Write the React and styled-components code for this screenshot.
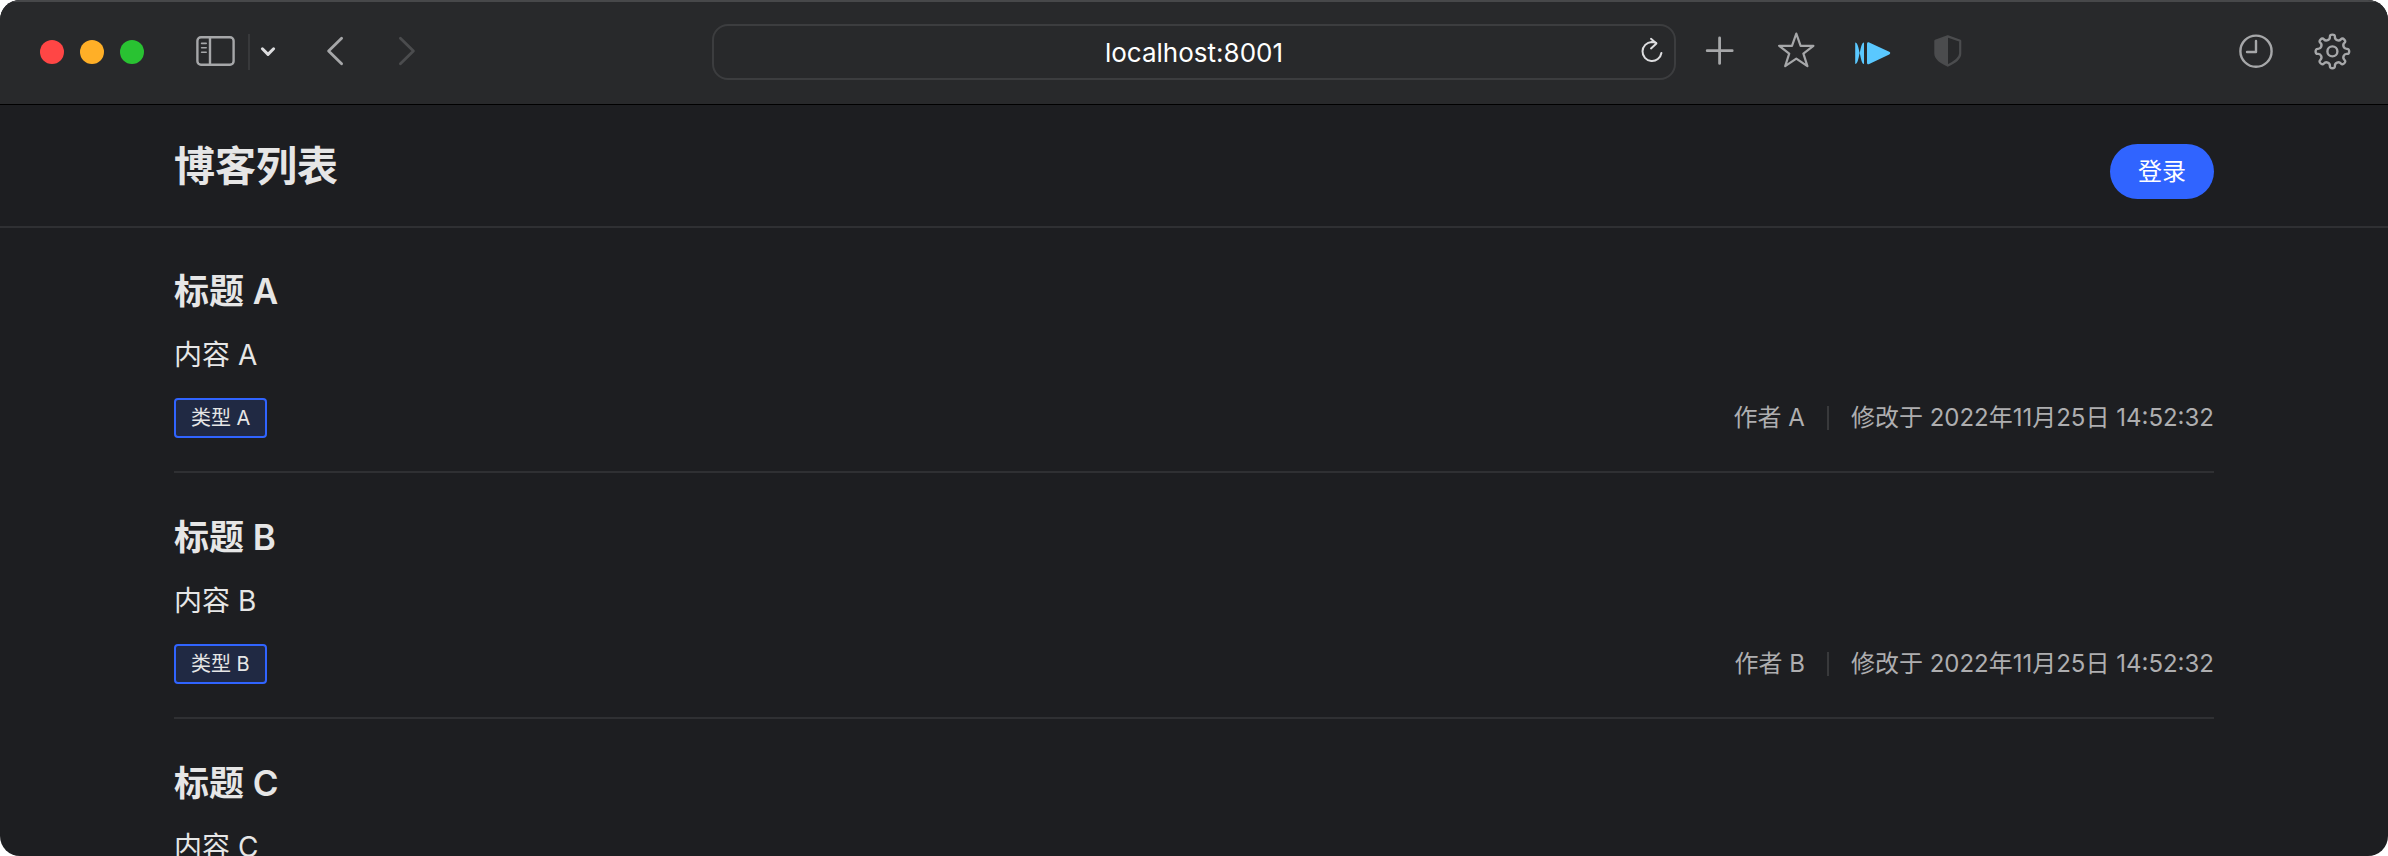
import React from "react";
import styled, { createGlobalStyle } from "styled-components";

const GlobalStyle = createGlobalStyle`
  *, *::before, *::after { box-sizing: border-box; }
  body {
    margin: 0;
    background: #ffffff;
    font-family: Inter, "Noto Sans CJK SC", sans-serif;
    color: #e6e6e6;
  }
  h1, h2, p { margin: 0; }
  button, input { font: inherit; }
`;

const Window = styled.div`
  display: flex;
  flex-direction: column;
  height: 100vh;
  overflow: hidden;
  border-radius: 20px;
  background: #1d1e21;
`;

const Toolbar = styled.div`
  display: grid;
  grid-template-columns: 1fr minmax(0, 964px) 1fr;
  align-items: center;
  flex: none;
  height: 105px;
  padding: 0 36px 2px;
  background: #28292b;
  border-top: 2px solid #47484a;
  border-bottom: 1px solid #000000;
`;

const ToolGroup = styled.div`
  display: flex;
  align-items: center;
  gap: ${(p) => p.$gap}px;
`;

const LeftTools = styled(ToolGroup)`
  margin: 0 36px 0 4px;
`;

const RightTools = styled.div`
  display: flex;
  justify-content: space-between;
  padding-left: 24px;
`;

const Light = styled.button`
  width: 24px;
  height: 24px;
  padding: 0;
  border: 0;
  border-radius: 50%;
  background: ${(p) => p.$color};
`;

const SidebarTools = styled(ToolGroup)`
  margin-left: 32px;
`;

const Navigation = styled(ToolGroup)`
  margin-left: 22px;
`;

const Separator = styled.span`
  width: 2px;
  height: ${(p) => p.$height}px;
  background: #38393b;
`;

const IconButton = styled.button`
  display: flex;
  flex: none;
  align-items: center;
  justify-content: center;
  width: ${(p) => p.$width || 40}px;
  height: 40px;
  padding: 0;
  border: 0;
  background: none;
  color: ${(p) => p.$color || "#a6a7a9"};
`;

const AddressBar = styled.div`
  display: flex;
  align-items: center;
  height: 56px;
  padding: 0 2px 0 42px;
  border: 2px solid #3c3d3f;
  border-radius: 16px;
`;

const AddressInput = styled.input`
  flex: 1;
  min-width: 0;
  height: 40px;
  padding: 0;
  border: 0;
  outline: 0;
  background: none;
  color: #ffffff;
  font-size: 26px;
  text-align: center;
`;

const Container = styled.div`
  width: 100%;
  max-width: 2040px;
  margin: 0 auto;
`;

const Header = styled.header`
  flex: none;
  border-bottom: 2px solid #2f3033;
`;

const HeaderRow = styled(Container)`
  display: flex;
  align-items: center;
  justify-content: space-between;
  height: 121px;
`;

const PageTitle = styled.h1`
  font-size: 41px;
  font-weight: 600;
  line-height: 56px;
`;

const LoginButton = styled.button`
  width: 104px;
  height: 55px;
  margin-top: 12px;
  padding: 0 0 4px;
  border: 0;
  border-radius: 28px;
  background: #3064ff;
  color: #ffffff;
  font-size: 24px;
`;

const Article = styled.article`
  padding: 37px 0 33px;
  border-bottom: 2px solid #2f3033;

  & + & {
    padding-top: 38px;
  }
`;

const ArticleTitle = styled.h2`
  font-size: 35px;
  font-weight: 600;
  line-height: 52px;
`;

const Summary = styled.p`
  margin-top: 16px;
  font-size: 28px;
  line-height: 44px;
`;

const ArticleFooter = styled.footer`
  display: flex;
  align-items: center;
  justify-content: space-between;
  margin-top: 21px;
`;

const Tag = styled.span`
  height: 40px;
  padding: 0 15px;
  border: 2px solid #3064ff;
  border-radius: 4px;
  background: #202943;
  font-size: 20px;
  line-height: 36px;
`;

const Meta = styled.div`
  display: flex;
  align-items: center;
  gap: 22px;
  color: #aeaeb0;
  font-size: 24px;
  line-height: 40px;
`;

const Icon = ({ width = 40, stroke = 2, children }) => (
  <svg
    width={width}
    height="40"
    viewBox={`0 0 ${width} 40`}
    fill="none"
    stroke="currentColor"
    strokeWidth={stroke}
    strokeLinecap="round"
    strokeLinejoin="round"
    aria-hidden="true"
  >
    {children}
  </svg>
);

const SidebarIcon = () => (
  <Icon stroke={2.4}>
    <rect x="1.4" y="5.2" width="36.2" height="27.6" rx="3.6" />
    <path d="M14 5.2v27.6" />
    <path strokeWidth="1.6" d="M5.6 11.4h4.6M5.6 15.8h4.6M5.6 20.2h4.6" />
  </Icon>
);

const ReloadIcon = () => (
  <Icon stroke={2}>
    <path d="M24.2 10.8C22.8 10.2 21.3 10 19.6 10A9.5 9.5 0 1 0 29.4 21" />
    <path d="M19 6.8l5.4 4.6-5.4 5" />
  </Icon>
);

const ShieldIcon = () => (
  <Icon stroke={2.2}>
    <path d="M19.8 4.4l12.4 4.4v12.8c0 5-5 8.2-12.4 12-7.4-3.8-12.4-7-12.4-12V8.8z" />
    <path fill="currentColor" stroke="none" d="M20 4L7 8.8v13c0 5.2 5.4 8.2 13 12z" />
  </Icon>
);

const PlayIcon = () => (
  <Icon>
    <path
      fill="currentColor"
      stroke="none"
      d="M3.2 10.6C5.4 10.6 6.4 15 7.6 21 6.4 27.4 5.4 32 3.2 32zM12 10.6V32C9.8 32 9 27 7.8 21 9 15 9.8 10.6 12 10.6z"
    />
    <path fill="currentColor" stroke="none" d="M15 12c0-1.4 1-2 2.2-1.4L37.2 19.8c1.4.6 1.4 2 0 2.6L17.2 32c-1.2.6-2.2.2-2.2-1.2z" />
  </Icon>
);

const gearPath = (() => {
  const points = [];
  const profile = [
    [-11, 12.4], [-9, 17], [9, 17], [11, 12.4],
  ];
  for (let i = 0; i < 8; i += 1) {
    profile.forEach(([offset, radius]) => {
      const angle = ((i * 45 - 90 + offset) * Math.PI) / 180;
      points.push([20.4 + radius * Math.cos(angle), 19.4 + radius * Math.sin(angle)]);
    });
  }
  const mid = (a, b) => [(a[0] + b[0]) / 2, (a[1] + b[1]) / 2];
  const toText = (p) => p.map((n) => n.toFixed(2)).join(" ");
  const start = mid(points[points.length - 1], points[0]);
  return points.reduce((d, p, i) => {
    const next = points[(i + 1) % points.length];
    return `${d}Q${toText(p)} ${toText(mid(p, next))}`;
  }, `M${toText(start)}`);
})();

const articles = [
  { id: "A", tag: "类型 A", author: "作者 A", time: "2022年11月25日 14:52:32" },
  { id: "B", tag: "类型 B", author: "作者 B", time: "2022年11月25日 14:52:32" },
  { id: "C" },
];

export default function App() {
  return (
    <>
      <GlobalStyle />
      <Window>
        <Toolbar>
          <LeftTools $gap={16}>
            <Light $color="#ff4645" aria-label="Close" />
            <Light $color="#ffaf27" aria-label="Minimise" />
            <Light $color="#29c232" aria-label="Zoom" />
            <SidebarTools $gap={8}>
              <IconButton $width={48} aria-label="Sidebar"><SidebarIcon /></IconButton>
              <Separator $height={36} />
              <IconButton $width={20} $color="#dddddf" aria-label="Tab groups">
                <Icon width={20} stroke={3}><path d="M4.4 16.8L10 22.4l5.6-5.6" /></Icon>
              </IconButton>
            </SidebarTools>
            <Navigation $gap={32}>
              <IconButton aria-label="Back">
                <Icon stroke={2.8}><path d="M25.6 6.2L12.6 19l13 12.8" /></Icon>
              </IconButton>
              <IconButton $color="#4b4c4e" disabled aria-label="Forward">
                <Icon stroke={2.8}><path d="M12.4 6.2l13 12.8-13 12.8" /></Icon>
              </IconButton>
            </Navigation>
          </LeftTools>

          <AddressBar>
            <AddressInput type="text" aria-label="Address" defaultValue="localhost:8001" />
            <IconButton $color="#dddddf" aria-label="Reload"><ReloadIcon /></IconButton>
          </AddressBar>

          <RightTools>
            <ToolGroup $gap={36}>
              <IconButton aria-label="New tab">
                <Icon stroke={2.8}><path d="M19.6 6v25.4M7.2 18.7h25" /></Icon>
              </IconButton>
              <IconButton aria-label="Bookmarks">
                <Icon stroke={2.2}>
                  <path d="M20.3 1.6l4.3 12.2h12.8L27.4 21.6l4 12.6-11.1-7.6-11.1 7.6 4-12.6L3.2 13.8H16z" />
                </Icon>
              </IconButton>
              <IconButton $color="#5ac8ff" aria-label="Playback"><PlayIcon /></IconButton>
              <IconButton $color="#4b4c4e" aria-label="Privacy"><ShieldIcon /></IconButton>
            </ToolGroup>
            <ToolGroup $gap={36}>
              <IconButton aria-label="History">
                <Icon stroke={2.4}>
                  <circle cx="20" cy="19.2" r="15.6" />
                  <path d="M20 9v11h-9" />
                </Icon>
              </IconButton>
              <IconButton aria-label="Settings">
                <Icon stroke={2.4}>
                  <path d={gearPath} />
                  <circle cx="20.4" cy="19.4" r="5" />
                </Icon>
              </IconButton>
            </ToolGroup>
          </RightTools>
        </Toolbar>

        <Header>
          <HeaderRow>
            <PageTitle>博客列表</PageTitle>
            <LoginButton>登录</LoginButton>
          </HeaderRow>
        </Header>

        <Container as="main">
          {articles.map((item) => (
            <Article key={item.id}>
              <ArticleTitle>标题 {item.id}</ArticleTitle>
              <Summary>内容 {item.id}</Summary>
              {item.tag && (
                <ArticleFooter>
                  <Tag>{item.tag}</Tag>
                  <Meta>
                    <span>{item.author}</span>
                    <Separator $height={24} />
                    <span>修改于 {item.time}</span>
                  </Meta>
                </ArticleFooter>
              )}
            </Article>
          ))}
        </Container>
      </Window>
    </>
  );
}
